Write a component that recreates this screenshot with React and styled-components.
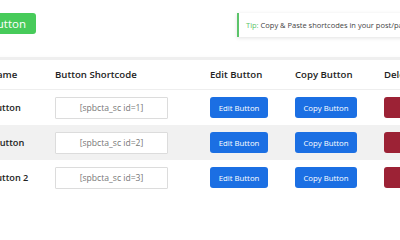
import React from 'react';
import styled, { createGlobalStyle } from 'styled-components';

const GlobalStyle = createGlobalStyle`
    body {
        margin: 0;
        background: #fff;
        font-family: "Open Sans", "Noto Sans", Arial, sans-serif;
        overflow: hidden;
    }
`;

const buttons = [
    { id: 1, name: 'Sample Button' },
    { id: 2, name: 'Another Button' },
    { id: 3, name: 'Sample Button 2' },
];

export default function App() {
    return (
        <>
            <GlobalStyle />
            <Page>
                <TopBar>
                    <AddButton>Add New Button</AddButton>
                    <Tip>
                        <strong>Tip:</strong> Copy &amp; Paste shortcodes in your post/page to display the button.
                    </Tip>
                </TopBar>
                <Card>
                    <HeadRow>
                        <Cell>Button Name</Cell>
                        <Cell>Button Shortcode</Cell>
                        <Cell>Edit Button</Cell>
                        <Cell>Copy Button</Cell>
                        <Cell>Delete Button</Cell>
                    </HeadRow>
                    {buttons.map((b, i) => (
                        <Row key={b.id} striped={i % 2 === 1}>
                            <Cell>{b.name}</Cell>
                            <Cell>
                                <Shortcode readOnly value={`[spbcta_sc id=${b.id}]`} />
                            </Cell>
                            <Cell><Action>Edit Button</Action></Cell>
                            <Cell><Action wide>Copy Button</Action></Cell>
                            <Cell><Action danger>Delete</Action></Cell>
                        </Row>
                    ))}
                </Card>
            </Page>
        </>
    );
}

const Page = styled.div`
    width: 560px;
    margin-left: -60px;
    padding-top: 13px;
`;

const TopBar = styled.div`
    display: flex;
    align-items: flex-start;
    height: 44px;
`;

const AddButton = styled.button`
    flex-shrink: 0;
    height: 21px;
    margin-left: -12px;
    padding: 0 10px;
    border: none;
    border-radius: 3px;
    background: #47cb5a;
    color: #fff;
    font-family: inherit;
    font-size: 11.5px;
    white-space: nowrap;
`;

const Tip = styled.div`
    flex-shrink: 0;
    margin-left: 201px;
    height: 24px;
    padding: 0 10px 0 7px;
    display: flex;
    align-items: center;
    gap: 2px;
    border-left: 2px solid #5cc46a;
    background: #fff;
    box-shadow: 0 1px 4px rgba(0, 0, 0, 0.12);
    color: #444;
    font-size: 7.5px;
    white-space: nowrap;

    strong {
        color: #5cc46a;
        font-weight: 400;
    }
`;

const Card = styled.div`
    border-top: 3px solid #efefef;
    background: #fff;
    box-shadow: 0 3px 6px rgba(0, 0, 0, 0.08);
    padding-bottom: 2px;
`;

const grid = `
    display: grid;
    grid-template-columns: 100px 155px 85px 89px 96px;
    align-items: center;
    padding-left: 15px;
`;

const HeadRow = styled.div`
    ${grid}
    height: 29px;
    border-bottom: 1px solid #eee;
    color: #222;
    font-size: 9.6px;
    font-weight: 600;
`;

const Row = styled.div`
    ${grid}
    height: 35px;
    background: ${p => (p.striped ? '#f1f1f1' : '#fff')};
    color: #222;
    font-size: 9.2px;
    font-weight: 600;
`;

const Cell = styled.div`
    white-space: nowrap;
`;

const Shortcode = styled.input`
    box-sizing: border-box;
    width: 113px;
    height: 22px;
    border: 1px solid #dcdcdc;
    border-radius: 1px;
    background: #fff;
    color: #777;
    font-family: inherit;
    font-size: 8.6px;
    text-align: center;
    outline: none;
`;

const Action = styled.button`
    height: 21px;
    width: ${p => (p.wide ? '62px' : '58px')};
    padding: 0 6px;
    border: none;
    border-radius: 3px;
    background: ${p => (p.danger ? '#9c2235' : '#1b6fe3')};
    color: #fff;
    font-family: inherit;
    font-size: 7.8px;
    white-space: nowrap;
`;
